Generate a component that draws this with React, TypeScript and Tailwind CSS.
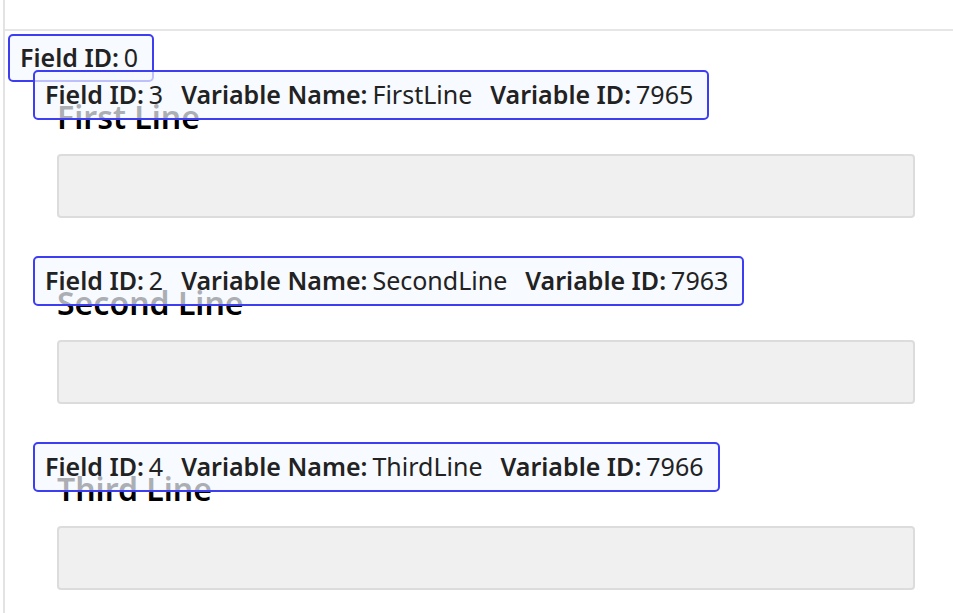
const fields = [
  { fieldId: 3, name: 'FirstLine', varId: 7965, label: 'First Line' },
  { fieldId: 2, name: 'SecondLine', varId: 7963, label: 'Second Line' },
  { fieldId: 4, name: 'ThirdLine', varId: 7966, label: 'Third Line' },
]

const font = { fontFamily: '"Noto Sans", "Open Sans", sans-serif' }

function Badge({ children, className }: { children: React.ReactNode; className: string }) {
  return (
    <div
      className={`absolute z-10 flex items-center whitespace-nowrap rounded-[5px] border-2 border-[#3d3df2] bg-[#f3f8ff]/70 pl-[10px] pr-[14px] text-[25px] text-[#222] ${className}`}
    >
      {children}
    </div>
  )
}

function Item({ k, v }: { k: string; v: string | number }) {
  return (
    <span className="mr-[18px] last:mr-0">
      <span className="mr-[5px] font-semibold">{k}</span>
      {v}
    </span>
  )
}

export default function App() {
  return (
    <div className="ml-[3px] min-h-screen border-l-2 border-[#e3e3e3] bg-white" style={font}>
      <div className="h-[31px] border-b-2 border-[#e6e6e6]" />
      <div className="relative pl-[52px] pr-[38px] pt-[67px]">
        <Badge className="left-[3px] top-[3px] h-[48px]">
          <Item k="Field ID:" v={0} />
        </Badge>

        <div className="flex flex-col gap-[66px]">
          {fields.map((f) => (
            <div key={f.fieldId} className="relative">
              <Badge className="-left-[24px] -top-[28px] h-[50px]">
                <Item k="Field ID:" v={f.fieldId} />
                <Item k="Variable Name:" v={f.name} />
                <Item k="Variable ID:" v={f.varId} />
              </Badge>
              <label className="block text-[32px] font-semibold leading-[38px] text-black">{f.label}</label>
              <div className="mt-[18px] h-16 w-full rounded-[4px] border-2 border-[#dcdcdc] bg-[#f0f0f0]" />
            </div>
          ))}
        </div>
      </div>
    </div>
  )
}
